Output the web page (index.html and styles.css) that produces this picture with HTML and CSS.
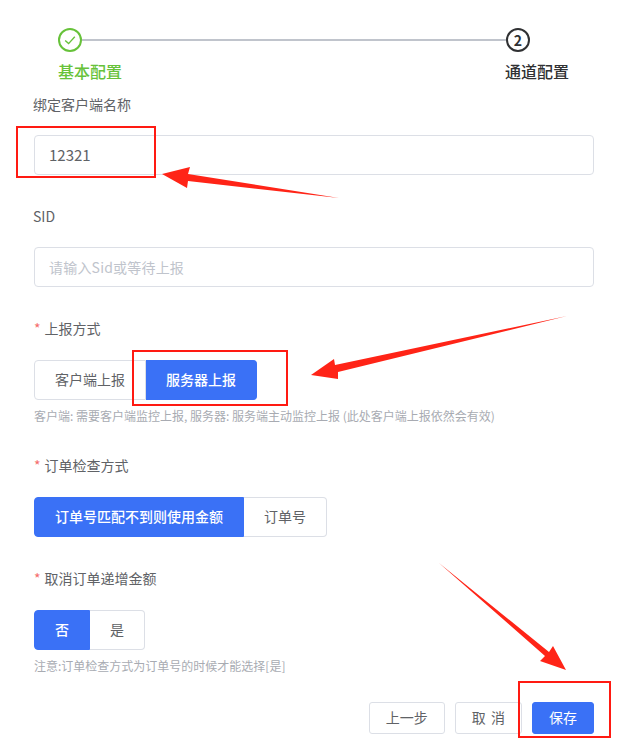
FILE: index.html
```html
<!DOCTYPE html>
<html lang="zh-CN">
<head>
  <meta charset="UTF-8" />
  <title>通道配置</title>
  <meta name="viewport" content="width=device-width, initial-scale=1.0" />
  <link rel="stylesheet" href="styles.css">
</head>
<body>
  <div class="page">
    <div class="steps">
      <div class="step step-done">
        <div class="step-head">
          <span class="step-icon">
            <svg width="14" height="14" viewBox="0 0 14 14"><path d="M2.2 7.4 5.6 10.6 11.8 3.8" fill="none" stroke="currentColor" stroke-width="1.4"/></svg>
          </span>
          <span class="step-line"></span>
        </div>
        <div class="step-title">基本配置</div>
      </div>
      <div class="step step-current">
        <div class="step-head">
          <span class="step-icon">2</span>
        </div>
        <div class="step-title">通道配置</div>
      </div>
    </div>

    <form class="form">
      <div class="field">
        <label class="field-label">绑定客户端名称</label>
        <input class="input" type="text" value="12321">
      </div>

      <div class="field">
        <label class="field-label">SID</label>
        <input class="input" type="text" placeholder="请输入Sid或等待上报">
      </div>

      <div class="field">
        <label class="field-label"><span class="req">*</span>上报方式</label>
        <div class="radio-group">
          <span class="radio">客户端上报</span>
          <span class="radio active">服务器上报</span>
        </div>
        <div class="hint">客户端: 需要客户端监控上报, 服务器: 服务端主动监控上报 (此处客户端上报依然会有效)</div>
      </div>

      <div class="field">
        <label class="field-label"><span class="req">*</span>订单检查方式</label>
        <div class="radio-group">
          <span class="radio active">订单号匹配不到则使用金额</span>
          <span class="radio">订单号</span>
        </div>
      </div>

      <div class="field">
        <label class="field-label"><span class="req">*</span>取消订单递增金额</label>
        <div class="radio-group">
          <span class="radio active">否</span>
          <span class="radio">是</span>
        </div>
        <div class="hint">注意:订单检查方式为订单号的时候才能选择[是]</div>
      </div>

      <div class="footer">
        <button class="btn" type="button">上一步</button>
        <button class="btn" type="button">取 消</button>
        <button class="btn btn-primary" type="button">保存</button>
      </div>
    </form>
  </div>

  <!-- red markup drawn on top of the screenshot -->
  <svg class="markup" width="624" height="738" viewBox="0 0 624 738">
    <g fill="none" stroke="#ff1a12" stroke-width="2">
      <rect x="17" y="127" width="138" height="50"/>
      <rect x="133" y="351" width="154" height="54"/>
      <rect x="519" y="682" width="91" height="55"/>
    </g>
    <g fill="#ff2417">
      <path d="M339 198 188 174 190 167 162 174 187 188 188 181Z"/>
      <path d="M567 316 335 365 334 359 311 375 338 379 338 372Z"/>
      <path d="M439 563 549 652 553 646 566 670 540 661 545 656Z"/>
    </g>
  </svg>
</body>
</html>
```

FILE: styles.css
```css
* {
  box-sizing: border-box;
}

body {
  margin: 0;
  background: #fff;
  font-family: "Noto Sans CJK SC", "Liberation Sans", sans-serif;
  font-size: 14px;
  color: #606266;
}

.page {
  padding: 28px 30px 0 34px;
}

.steps {
  display: flex;
  margin-left: 24px;
  margin-right: 24px;
}

.step {
  width: 64px;
}

.step-done {
  flex: 1;
  color: #67c23a;
}

.step-current {
  color: #303133;
}

.step-current .step-title {
  margin-left: -1px;
}

.step-head {
  display: flex;
  align-items: center;
}

.step-icon {
  flex: none;
  width: 24px;
  height: 24px;
  border: 2px solid currentColor;
  border-radius: 50%;
  display: flex;
  align-items: center;
  justify-content: center;
  font-size: 14px;
  font-weight: 700;
  line-height: 1;
}

.step-line {
  flex: 1;
  height: 2px;
  background: #c0c4cc;
}

.step-title {
  margin-top: 8px;
  font-size: 16px;
  line-height: 22px;
  font-weight: 500;
}

.form {
  margin-top: 13px;
}

.field {
  margin-bottom: 32px;
}

.field-label {
  display: block;
  height: 20px;
  line-height: 18px;
  margin-bottom: 21px;
  margin-left: -1px;
  font-size: 14px;
}

.req {
  color: #f56c6c;
  margin-left: 1px;
  margin-right: 4px;
}

.input {
  display: block;
  width: 100%;
  height: 40px;
  margin-top: -1px;
  padding: 0 14px 2px;
  border: 1px solid #dcdfe6;
  border-radius: 4px;
  background: #fff;
  font: inherit;
  font-size: 15px;
  color: #606266;
}

.input::placeholder {
  color: #c0c4cc;
  font-size: 14px;
  letter-spacing: 0.2px;
  opacity: 1;
}

.radio-group {
  display: flex;
}

.radio {
  height: 40px;
  padding: 0 20px;
  line-height: 36px;
  border: 1px solid #dcdfe6;
  background: #fff;
}

.radio + .radio {
  border-left: 0;
}

.radio:first-child {
  border-radius: 4px 0 0 4px;
}

.radio:last-child {
  border-radius: 0 4px 4px 0;
}

.radio.active {
  background: #3a71f6;
  border-color: #3a71f6;
  color: #fff;
  font-weight: 500;
}

.hint {
  margin-top: 8px;
  font-size: 12px;
  line-height: 16px;
  color: #a8abb2;
}

.footer {
  display: flex;
  justify-content: flex-end;
  gap: 10px;
  margin-top: -4px;
}

.btn {
  height: 32px;
  padding: 0 16px 2px;
  border: 1px solid #dcdfe6;
  border-radius: 3px;
  background: #fff;
  font: inherit;
  font-size: 14px;
  word-spacing: 2px;
  color: #606266;
}

.btn-primary {
  background: #3a71f6;
  border-color: #3a71f6;
  color: #fff;
}

.markup {
  position: absolute;
  left: 0;
  top: 0;
  pointer-events: none;
}
```
